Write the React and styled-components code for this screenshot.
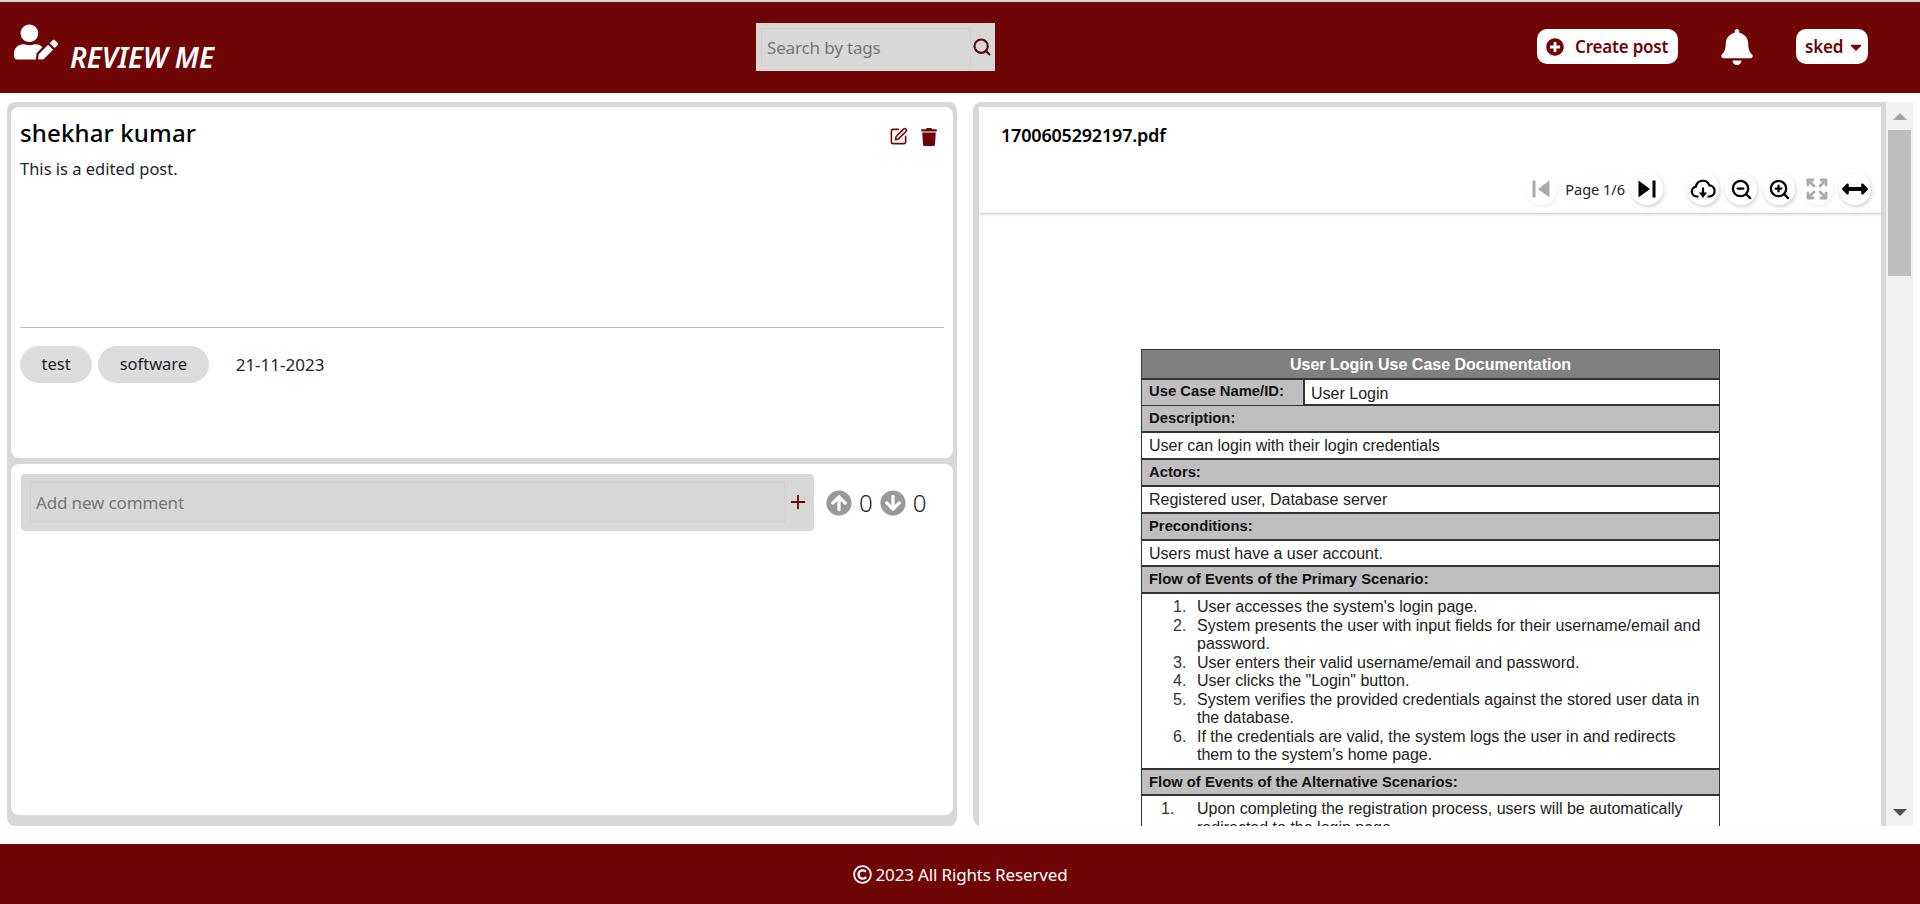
import styled, { createGlobalStyle } from "styled-components";
import {
  FaUserEdit,
  FaPlusCircle,
  FaBell,
  FaCaretDown,
  FaTrash,
  FaArrowCircleUp,
  FaArrowCircleDown,
  FaArrowsAltH,
  FaRegCopyright,
} from "react-icons/fa";
import { Expand, Plus, Search, SquarePen, ZoomIn, ZoomOut } from "lucide-react";

const maroon = "#700505";
const panelGrey = "#d8d8d8";
const uiFont = `"Noto Sans", "Open Sans", "Liberation Sans", sans-serif`;

const GlobalStyle = createGlobalStyle`
  html, body {
    margin: 0;
    padding: 0;
    height: 904px;
    overflow: hidden;
    background: #fff;
    font-family: ${uiFont};
    color: #212529;
  }
  * { box-sizing: border-box; }
`;

const Page = styled.div`
  width: 1920px;
  height: 904px;
  display: flex;
  flex-direction: column;
`;

const Header = styled.header`
  height: 93px;
  flex: none;
  border-top: 2px solid ${panelGrey};
  background: ${maroon};
  display: grid;
  grid-template-columns: 756px 239px 542px 141px 44px 30px 44px 72px 1fr;
  align-items: center;
`;

const Brand = styled.div`
  display: flex;
  align-items: flex-start;
  padding-left: 14px;
  color: #fff;
  gap: 12px;
  height: 44px;
  margin-top: -3px;
  svg {
    width: 44px;
    height: 36px;
  }
`;

const BrandName = styled.div`
  font-size: 28px;
  font-weight: 600;
  font-style: italic;
  letter-spacing: 0;
  line-height: 32px;
  margin-top: 17px;
  white-space: nowrap;
`;

const SearchBox = styled.div`
  height: 48px;
  margin-top: -1px;
  background: ${panelGrey};
  padding: 5px 3px 5px 5px;
  display: flex;
  align-items: center;
  color: #5a0a0a;
  svg {
    margin-left: 1px;
    flex: none;
  }
`;

const Field = styled.input`
  flex: 1;
  min-width: 0;
  height: 100%;
  border: 1px solid #cfcfcf;
  background: transparent;
  padding: 0 5px;
  font-family: ${uiFont};
  font-size: 17px;
  letter-spacing: -0.15px;
  outline: none;
  &::placeholder {
    color: #757575;
    opacity: 1;
  }
`;

const PillButton = styled.button`
  height: 35px;
  margin-top: -2px;
  border: none;
  border-radius: 10px;
  background: #fff;
  color: ${maroon};
  font-family: ${uiFont};
  font-size: 17px;
  font-weight: 600;
  letter-spacing: -0.2px;
  display: flex;
  align-items: center;
  gap: ${(p) => p.$gap}px;
  padding: 0 ${(p) => p.$pad}px;
  white-space: nowrap;
  svg {
    font-size: ${(p) => p.$icon}px;
    flex: none;
  }
`;

const BellIcon = styled(FaBell)`
  color: #fff;
  font-size: 36px;
  width: 32px;
  margin-top: -1px;
  justify-self: center;
`;

const Main = styled.main`
  flex: 1;
  min-height: 0;
  display: flex;
  gap: 16px;
  padding: 9px 7px 18px;
`;

const LeftPanel = styled.section`
  width: 950px;
  flex: none;
  background: ${panelGrey};
  border-radius: 8px;
  padding: 5px 4px 11px;
  display: flex;
  flex-direction: column;
  gap: 6px;
`;

const Card = styled.div`
  background: #fff;
  border-radius: 8px;
  flex: ${(p) => (p.$grow ? 1 : "none")};
  height: ${(p) => (p.$grow ? "auto" : "351px")};
  padding: ${(p) => p.$padding};
`;

const PostHead = styled.div`
  display: flex;
  justify-content: space-between;
  align-items: flex-start;
`;

const Author = styled.h2`
  margin: 0;
  font-size: 24px;
  font-weight: 500;
  letter-spacing: 0.15px;
  line-height: 32px;
  color: #000;
`;

const PostActions = styled.div`
  display: flex;
  align-items: center;
  gap: 12px;
  padding: 10px 6px 0 0;
  color: ${maroon};
  font-size: 18px;
`;

const PostBody = styled.p`
  margin: 7px 0 0;
  height: 171px;
  font-size: 16.5px;
  line-height: 25px;
`;

const Divider = styled.hr`
  margin: 0;
  border: none;
  border-top: 1px solid #bbb;
`;

const TagRow = styled.div`
  display: flex;
  align-items: center;
  margin-top: 18px;
  gap: 6px;
`;

const Tag = styled.span`
  height: 37px;
  padding: 0 21.5px;
  border-radius: 19px;
  background: #dcdcdc;
  font-size: 16.5px;
  line-height: 36px;
`;

const PostDate = styled.span`
  margin-left: 21px;
  font-size: 17px;
`;

const CommentRow = styled.div`
  display: flex;
  align-items: center;
`;

const CommentBox = styled.div`
  width: 793px;
  height: 57px;
  background: ${panelGrey};
  border-radius: 4px;
  padding: 8px 5px 9px 9px;
  display: flex;
  align-items: center;
  gap: 2px;
  color: ${maroon};
  svg {
    flex: none;
  }
`;

const Votes = styled.div`
  display: flex;
  align-items: center;
  margin-left: 12px;
  svg {
    color: #999;
    font-size: 26px;
  }
`;

const VoteCount = styled.span`
  font-size: 24px;
  font-weight: 300;
  margin: 0 7px;
  min-width: 13px;
  line-height: 32px;
`;

const RightPanel = styled.section`
  flex: 1;
  min-width: 0;
  background: ${panelGrey};
  border-top-left-radius: 8px;
  border-bottom-left-radius: 8px;
  padding: 5px 0 0 6px;
  display: flex;
  overflow: hidden;
`;

const Viewer = styled.div`
  width: 902px;
  flex: none;
  background: #fff;
  display: flex;
  flex-direction: column;
  overflow: hidden;
`;

const ViewerHead = styled.div`
  height: 106px;
  flex: none;
  display: flex;
  flex-direction: column;
  box-shadow: 0 1px 3px rgba(0, 0, 0, 0.25);
  position: relative;
`;

const FileName = styled.div`
  padding: 15px 0 0 22px;
  font-size: 18px;
  font-weight: 600;
  line-height: 26px;
  color: #000;
  letter-spacing: -0.2px;
`;

const Toolbar = styled.div`
  display: flex;
  justify-content: flex-end;
  align-items: center;
  margin-top: 25px;
  padding-right: 10px;
`;

const ToolButton = styled.span`
  width: 32px;
  height: 32px;
  border-radius: 50%;
  margin-left: ${(p) => p.$gap || 6}px;
  display: flex;
  align-items: center;
  justify-content: center;
  color: ${(p) => (p.$off ? "#aaa" : "#000")};
  font-size: ${(p) => p.$size || 18}px;
  box-shadow: ${(p) =>
    p.$off
      ? "1px 2px 4px rgba(0, 0, 0, 0.06)"
      : "1px 2px 4px rgba(0, 0, 0, 0.18)"};
`;

const PageCount = styled.span`
  font-size: 14.5px;
  margin: 0 4px 0 8px;
  color: #222;
  white-space: nowrap;
`;

const Sheet = styled.div`
  flex: 1;
  min-height: 0;
  overflow: hidden;
  padding: 136px 0 0 162px;
`;

const DocTable = styled.div`
  width: 579px;
  border: solid #333;
  border-width: 1px 1px 0;
  font-family: "Liberation Sans", Arial, sans-serif;
  font-size: 16px;
  color: #222;
`;

const DocTitle = styled.div`
  height: 28px;
  background: #808080;
  color: #fff;
  font-weight: 700;
  text-align: center;
  line-height: 29px;
`;

const DocRow = styled.div`
  height: ${(p) => p.$h || 27}px;
  border-top: 2px solid #333;
  padding: 0 7px;
  line-height: 25px;
  background: ${(p) => (p.$head ? "#bfbfbf" : "#fff")};
  font-weight: ${(p) => (p.$head ? 700 : 400)};
  font-size: ${(p) => (p.$head ? "14.8px" : "16px")};
  color: ${(p) => (p.$head ? "#111" : "#222")};
`;

const SplitRow = styled.div`
  height: 26px;
  border-top: 2px solid #333;
  display: grid;
  grid-template-columns: 161px 1fr;
  line-height: 23px;
`;

const SplitLabel = styled.div`
  background: #bfbfbf;
  padding-left: 7px;
  font-weight: 700;
  font-size: 14.8px;
  color: #111;
`;

const SplitValue = styled.div`
  border-left: 2px solid #333;
  padding: 2px 0 0 6px;
`;

const StepList = styled.ol`
  margin: 0;
  padding: 4px 12px 0 55px;
  border-top: 2px solid #333;
  line-height: 18.5px;
  height: ${(p) => p.$h}px;
  list-style: none;
  li::before {
    content: counter(list-item) ".";
    display: inline-block;
    width: ${(p) => p.$marker}px;
    margin-left: -${(p) => p.$marker}px;
    color: #333;
  }
`;

const Scrollbar = styled.div`
  width: 27px;
  margin: -5px 0 0 5px;
  flex: none;
  background: #f1f1f1;
  display: flex;
  flex-direction: column;
  align-items: center;
  padding: 0 2px;
`;

const ScrollArrow = styled.div`
  height: 28px;
  flex: none;
  display: flex;
  align-items: center;
  justify-content: center;
  &::before {
    content: "";
    border-left: 7px solid transparent;
    border-right: 7px solid transparent;
    border-${(p) => (p.$down ? "top" : "bottom")}: 7px solid ${(p) =>
      p.$down ? "#505050" : "#a3a3a3"};
  }
`;

const ScrollThumb = styled.div`
  width: 100%;
  height: 146px;
  flex: none;
  background: #bdbdbd;
`;

const ScrollRest = styled.div`
  flex: 1;
`;

const Footer = styled.footer`
  height: 60px;
  flex: none;
  background: ${maroon};
  color: #fff;
  display: flex;
  align-items: center;
  justify-content: center;
  gap: 4px;
  font-size: 17px;
  letter-spacing: -0.15px;
  svg {
    font-size: 19px;
  }
`;

const steps = [
  "User accesses the system's login page.",
  "System presents the user with input fields for their username/email and password.",
  "User enters their valid username/email and password.",
  'User clicks the "Login" button.',
  "System verifies the provided credentials against the stored user data in the database.",
  "If the credentials are valid, the system logs the user in and redirects them to the system's home page.",
];

// pdf viewer toolbar glyphs, the icon packs have nothing close enough
const StepIcon = ({ flip }) => (
  <svg
    width="18"
    height="18"
    viewBox="0 0 18 18"
    fill="currentColor"
    style={flip ? { transform: "scaleX(-1)" } : undefined}
  >
    <rect x="0.5" y="0.5" width="3" height="17" />
    <path d="M17.5 0.5v17L6 9z" />
  </svg>
);

const CloudIcon = () => (
  <svg width="26" height="20" viewBox="0 0 26 20" fill="none" stroke="currentColor" strokeWidth="2.2">
    <path d="M8.5 17.5H6.5a5 5 0 0 1-.6-9.9 7 7 0 0 1 13.5-1.2 5.6 5.6 0 0 1 .6 11.1h-2.5" />
    <path d="M13 8.5v6" />
    <path d="M9 13.5h8L13 19z" fill="currentColor" stroke="none" />
  </svg>
);

const App = () => {
  return (
    <Page>
      <GlobalStyle />
      <Header>
        <Brand>
          <FaUserEdit />
          <BrandName>REVIEW ME</BrandName>
        </Brand>
        <SearchBox>
          <Field placeholder="Search by tags" />
          <Search size={20} strokeWidth={2.6} />
        </SearchBox>
        <span />
        <PillButton $gap={11} $pad={9} $icon={18}>
          <FaPlusCircle />
          Create post
        </PillButton>
        <span />
        <BellIcon />
        <span />
        <PillButton $gap={4} $pad={9} $icon={18}>
          sked
          <FaCaretDown />
        </PillButton>
      </Header>

      <Main>
        <LeftPanel>
          <Card $padding="10px 9px 0 9px">
            <PostHead>
              <Author>shekhar kumar</Author>
              <PostActions>
                <SquarePen size={19} strokeWidth={2} />
                <FaTrash />
              </PostActions>
            </PostHead>
            <PostBody>This is a edited post.</PostBody>
            <Divider />
            <TagRow>
              <Tag>test</Tag>
              <Tag>software</Tag>
              <PostDate>21-11-2023</PostDate>
            </TagRow>
          </Card>
          <Card $grow $padding="10px 0 0 10px">
            <CommentRow>
              <CommentBox>
                <Field placeholder="Add new comment" />
                <Plus size={22} strokeWidth={2} />
              </CommentBox>
              <Votes>
                <FaArrowCircleUp />
                <VoteCount>0</VoteCount>
                <FaArrowCircleDown />
                <VoteCount>0</VoteCount>
              </Votes>
            </CommentRow>
          </Card>
        </LeftPanel>

        <RightPanel>
          <Viewer>
            <ViewerHead>
              <FileName>1700605292197.pdf</FileName>
              <Toolbar>
                <ToolButton $off>
                  <StepIcon />
                </ToolButton>
                <PageCount>Page 1/6</PageCount>
                <ToolButton $gap={2}>
                  <StepIcon flip />
                </ToolButton>
                <ToolButton $gap={24}>
                  <CloudIcon />
                </ToolButton>
                <ToolButton>
                  <ZoomOut size={23} strokeWidth={2.4} />
                </ToolButton>
                <ToolButton>
                  <ZoomIn size={23} strokeWidth={2.4} />
                </ToolButton>
                <ToolButton $off>
                  <Expand size={24} strokeWidth={2.8} />
                </ToolButton>
                <ToolButton $size={26}>
                  <FaArrowsAltH />
                </ToolButton>
              </Toolbar>
            </ViewerHead>
            <Sheet>
              <DocTable>
                <DocTitle>User Login Use Case Documentation</DocTitle>
                <SplitRow>
                  <SplitLabel>Use Case Name/ID:</SplitLabel>
                  <SplitValue>User Login</SplitValue>
                </SplitRow>
                <DocRow $head>Description:</DocRow>
                <DocRow>User can login with their login credentials</DocRow>
                <DocRow $head>Actors:</DocRow>
                <DocRow>Registered user, Database server</DocRow>
                <DocRow $head>Preconditions:</DocRow>
                <DocRow $h={26}>Users must have a user account.</DocRow>
                <DocRow $head>Flow of Events of the Primary Scenario:</DocRow>
                <StepList $h={176} $marker={24}>
                  {steps.map((step) => (
                    <li key={step}>{step}</li>
                  ))}
                </StepList>
                <DocRow $head $h={26}>
                  Flow of Events of the Alternative Scenarios:
                </DocRow>
                <StepList $h={60} $marker={36}>
                  <li>
                    Upon completing the registration process, users will be
                    automatically redirected to the login page.
                  </li>
                </StepList>
              </DocTable>
            </Sheet>
          </Viewer>
          <Scrollbar>
            <ScrollArrow />
            <ScrollThumb />
            <ScrollRest />
            <ScrollArrow $down />
          </Scrollbar>
        </RightPanel>
      </Main>

      <Footer>
        <FaRegCopyright />
        2023 All Rights Reserved
      </Footer>
    </Page>
  );
};

export default App;
